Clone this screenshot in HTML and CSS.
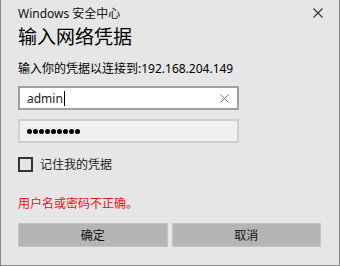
FILE: index.html
```html
<!DOCTYPE html>
<html lang="zh-cn">
  <head>
    <meta charset="UTF-8" />
    <title>Windows 安全中心</title>
    <link rel="stylesheet" href="styles.css">
  </head>
  <body>
    <div class="dialog">
      <div class="titlebar">
        <span class="app">Windows 安全中心</span>
        <svg class="close" width="10" height="10" viewBox="0 0 10 10">
          <path d="M0.5 0.5L9.5 9.5M9.5 0.5L0.5 9.5" stroke="#333" stroke-width="1.1" />
        </svg>
      </div>
      <h1>输入网络凭据</h1>
      <p class="info">输入你的凭据以连接到:192.168.204.149</p>

      <div class="field active">
        <span class="value">admin<span class="caret"></span></span>
        <svg class="clear" width="9" height="9" viewBox="0 0 9 9">
          <path d="M0.5 0.5L8.5 8.5M8.5 0.5L0.5 8.5" stroke="#777" stroke-width="1" />
        </svg>
      </div>
      <div class="field">
        <span class="dots" aria-label="密码">
          <i></i><i></i><i></i><i></i><i></i><i></i><i></i><i></i><i></i>
        </span>
      </div>

      <label class="remember">
        <span class="box"></span>
        <span>记住我的凭据</span>
      </label>

      <p class="error">用户名或密码不正确。</p>

      <div class="buttons">
        <button>确定</button>
        <button>取消</button>
      </div>
    </div>
  </body>
</html>
```

FILE: styles.css
```css
body {
  margin: 0;
  font-family: "Segoe UI", "Noto Sans", "Noto Sans CJK SC", sans-serif;
  background-color: #e6e6e6;
}

.dialog {
  box-sizing: border-box;
  width: 340px;
  height: 266px;
  border: 1px solid #8a8a8a;
  border-top: none;
  padding: 0 18px 0 17px;
  color: #000;
}

.titlebar {
  display: flex;
  justify-content: space-between;
  align-items: center;
  height: 26px;
  font-size: 12px;
  color: #111;
}

.close {
  margin-right: -2px;
}

h1 {
  margin: 0;
  font-size: 19px;
  font-weight: normal;
  height: 26px;
  line-height: 22px;
}

.info {
  margin: 9px 0 0;
  font-size: 12px;
  line-height: 16px;
}

.field {
  box-sizing: border-box;
  width: 221px;
  height: 24px;
  margin-top: 9px;
  display: flex;
  align-items: center;
  justify-content: space-between;
  padding: 0 8px 0 7px;
  border: 2px solid #cfcfcf;
  background-color: #f0f0f0;
  font-size: 12px;
}

.field.active {
  border-color: #a0a0a0;
  background-color: #fff;
}

.value {
  display: flex;
  align-items: center;
  color: #222;
}

.caret {
  display: inline-block;
  width: 1px;
  height: 15px;
  margin-left: 1px;
  background-color: #000;
}

.dots {
  display: flex;
  gap: 1px;
}

.dots i {
  width: 5px;
  height: 5px;
  border-radius: 50%;
  background-color: #000;
}

.remember {
  display: flex;
  align-items: center;
  gap: 7px;
  margin-top: 12px;
  font-size: 12px;
  color: #222;
}

.box {
  box-sizing: border-box;
  width: 15px;
  height: 15px;
  border: 2px solid #333;
}

.error {
  margin: 23px 0 0;
  font-size: 12px;
  line-height: 16px;
  color: #e81123;
}

.buttons {
  display: flex;
  gap: 4px;
  margin-top: 11px;
}

.buttons button {
  flex: 1;
  height: 24px;
  border: 1px solid #c4c4c4;
  background-color: #b5b5b5;
  font-family: inherit;
  font-size: 12px;
  color: #111;
  padding: 0;
}
```
